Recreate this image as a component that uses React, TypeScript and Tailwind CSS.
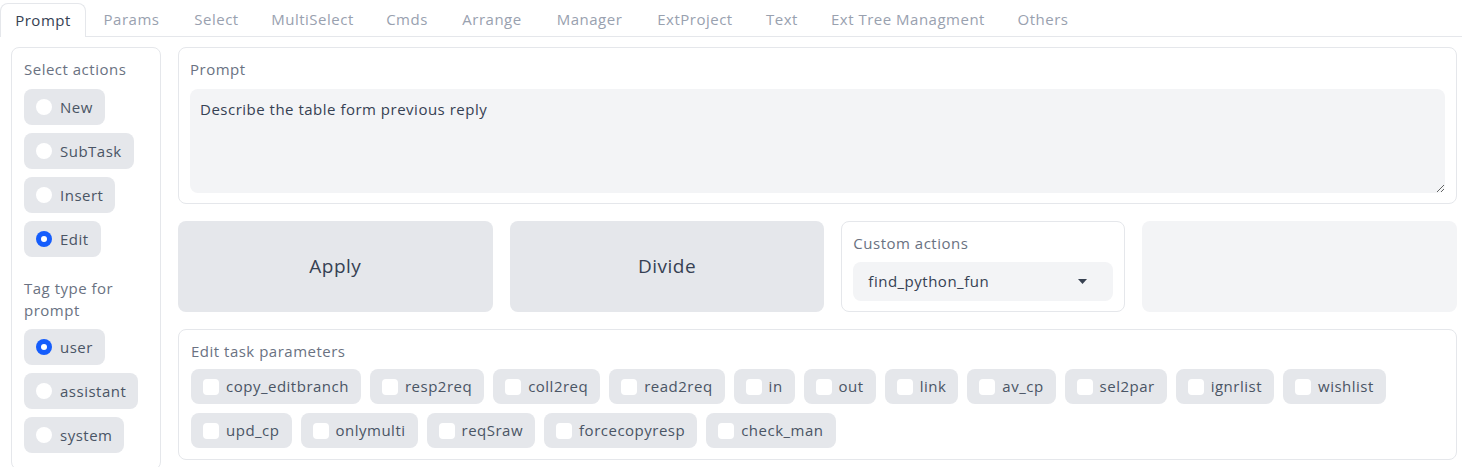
import { useState } from "react";

const tabs = [
  { name: "Prompt", w: "w-[86px]" },
  { name: "Params", w: "w-[91px]" },
  { name: "Select", w: "w-[79px]" },
  { name: "MultiSelect", w: "w-[113px]" },
  { name: "Cmds", w: "w-[76px]" },
  { name: "Arrange", w: "w-[94px]" },
  { name: "Manager", w: "w-[101px]" },
  { name: "ExtProject", w: "w-[110px]" },
  { name: "Text", w: "w-[64px]" },
  { name: "Ext Tree Managment", w: "w-[188px]" },
  { name: "Others", w: "w-[82px]" },
];

const params = [
  "copy_editbranch",
  "resp2req",
  "coll2req",
  "read2req",
  "in",
  "out",
  "link",
  "av_cp",
  "sel2par",
  "ignrlist",
  "wishlist",
  "upd_cp",
  "onlymulti",
  "reqSraw",
  "forcecopyresp",
  "check_man",
];

export default function App() {
  const [tab, setTab] = useState("Prompt");
  const [action, setAction] = useState("Edit");
  const [tag, setTag] = useState("user");
  const [checked, setChecked] = useState<Record<string, boolean>>({});

  return (
    <div className="min-h-screen bg-white text-[15px] tracking-[0.5px] text-gray-600 font-['Open_Sans',sans-serif]">
      {/* tab bar */}
      <div className="flex items-end h-[37px] border-b border-gray-200">
        {tabs.map((t) => (
          <button
            key={t.name}
            onClick={() => setTab(t.name)}
            className={`${t.w} h-[33px] shrink-0 text-center ${
              tab === t.name
                ? "border border-b-0 border-gray-200 rounded-t-lg bg-white text-gray-700 -mb-px h-[34px]"
                : "text-gray-400"
            }`}
          >
            {t.name}
          </button>
        ))}
      </div>

      <div className="flex gap-[17px] pl-[11px] pr-[5px] pt-[10px]">
        {/* left column */}
        <div className="w-[150px] shrink-0 border border-gray-200 rounded-lg px-[12px] pt-[10px] pb-4">
          <p className="leading-[22px] mb-[9px] text-gray-500">Select actions</p>
          <div className="flex flex-col items-start gap-2">
            {["New", "SubTask", "Insert", "Edit"].map((a) => (
              <Radio key={a} label={a} selected={action === a} onClick={() => setAction(a)} />
            ))}
          </div>
          <p className="leading-[22px] mt-[20px] mb-2 text-gray-500">Tag type for prompt</p>
          <div className="flex flex-col items-start gap-2">
            {["user", "assistant", "system"].map((a) => (
              <Radio key={a} label={a} selected={tag === a} onClick={() => setTag(a)} />
            ))}
          </div>
        </div>

        {/* right column */}
        <div className="flex-1 flex flex-col gap-[17px]">
          <div className="border border-gray-200 rounded-lg px-[11px] pt-[10px] pb-[10px]">
            <p className="leading-[22px] mb-[9px] text-gray-500">Prompt</p>
            <textarea
              defaultValue="Describe the table form previous reply"
              className="block w-full h-[104px] bg-gray-100 rounded-lg px-[10px] py-[9px] text-gray-700 outline-none resize-y"
            />
          </div>

          <div className="flex gap-[17px] h-[91px]">
            <button className="flex-1 bg-gray-200 rounded-lg text-[19px] font-medium text-gray-700">
              Apply
            </button>
            <button className="flex-1 bg-gray-200 rounded-lg text-[19px] font-medium text-gray-700">
              Divide
            </button>
            <div className="w-[284px] shrink-0 border border-gray-200 rounded-lg px-[11px] pt-[10px]">
              <p className="leading-[22px] mb-[8px] text-gray-500">Custom actions</p>
              <div className="h-[39px] bg-gray-100 rounded-lg flex items-center justify-between pl-[15px] pr-[26px] text-gray-700">
                <span>find_python_fun</span>
                <svg width="9" height="5" viewBox="0 0 9 5">
                  <path d="M0 0 H9 L4.5 5 Z" fill="#374151" />
                </svg>
              </div>
            </div>
            <div className="flex-1 bg-gray-100 rounded-lg" />
          </div>

          <div className="border border-gray-200 rounded-lg px-[12px] pt-[10px] pb-[11px]">
            <p className="leading-[22px] mb-[7px] text-gray-500">Edit task parameters</p>
            <div className="flex flex-wrap gap-x-[9px] gap-y-[9px]">
              {params.map((p) => (
                <label
                  key={p}
                  className="h-[35px] flex items-center gap-[7px] bg-gray-200 rounded-lg pl-[12px] pr-[12px] text-gray-600 cursor-pointer"
                >
                  <input
                    type="checkbox"
                    checked={!!checked[p]}
                    onChange={() => setChecked({ ...checked, [p]: !checked[p] })}
                    className="appearance-none w-4 h-4 rounded bg-white checked:bg-blue-600"
                  />
                  {p}
                </label>
              ))}
            </div>
          </div>
        </div>
      </div>
    </div>
  );
}

function Radio({ label, selected, onClick }: { label: string; selected: boolean; onClick: () => void }) {
  return (
    <button
      onClick={onClick}
      className="h-[36px] flex items-center gap-[8px] bg-gray-200 rounded-lg pl-[12px] pr-[12px] text-gray-600"
    >
      {selected ? (
        <span className="w-4 h-4 rounded-full bg-blue-600 flex items-center justify-center">
          <span className="w-[6px] h-[6px] rounded-full bg-white" />
        </span>
      ) : (
        <span className="w-4 h-4 rounded-full bg-white" />
      )}
      {label}
    </button>
  );
}
